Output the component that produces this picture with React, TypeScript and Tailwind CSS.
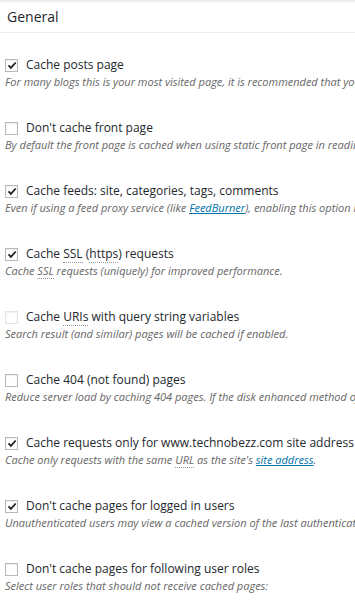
import React from "react";

type Option = {
  label: React.ReactNode;
  desc: React.ReactNode;
  checked: boolean;
  disabled?: boolean;
};

function Abbr({ children }: { children: React.ReactNode }) {
  return (
    <span className="border-b border-dotted border-[#999]">{children}</span>
  );
}

function Link({ children }: { children: React.ReactNode }) {
  return <span className="text-[#0073aa] underline">{children}</span>;
}

const options: Option[] = [
  {
    label: "Cache posts page",
    desc: "For many blogs this is your most visited page, it is recommended that you cache it.",
    checked: true,
  },
  {
    label: "Don't cache front page",
    desc: "By default the front page is cached when using static front page in reading settings.",
    checked: false,
  },
  {
    label: "Cache feeds: site, categories, tags, comments",
    desc: (
      <>
        Even if using a feed proxy service (like <Link>FeedBurner</Link>), enabling this option is still recommended.
      </>
    ),
    checked: true,
  },
  {
    label: (
      <>
        Cache <Abbr>SSL</Abbr> (<Abbr>https</Abbr>) requests
      </>
    ),
    desc: (
      <>
        Cache <Abbr>SSL</Abbr> requests (uniquely) for improved performance.
      </>
    ),
    checked: true,
  },
  {
    label: (
      <>
        Cache <Abbr>URIs</Abbr> with query string variables
      </>
    ),
    desc: "Search result (and similar) pages will be cached if enabled.",
    checked: false,
    disabled: true,
  },
  {
    label: "Cache 404 (not found) pages",
    desc: "Reduce server load by caching 404 pages. If the disk enhanced method of disk caching is used.",
    checked: false,
  },
  {
    label: "Cache requests only for www.technobezz.com site address",
    desc: (
      <>
        Cache only requests with the same <Abbr>URL</Abbr> as the site's <Link>site address</Link>.
      </>
    ),
    checked: true,
  },
  {
    label: "Don't cache pages for logged in users",
    desc: "Unauthenticated users may view a cached version of the last authenticated user's view.",
    checked: true,
  },
  {
    label: "Don't cache pages for following user roles",
    desc: "Select user roles that should not receive cached pages:",
    checked: false,
  },
];

function Checkbox({ checked, disabled }: { checked: boolean; disabled?: boolean }) {
  return (
    <span
      className={`flex h-[13px] w-[13px] shrink-0 items-center justify-center border bg-white ${
        disabled ? "border-[#e2e4e7]" : "border-[#b4b9be]"
      } shadow-[inset_0_1px_2px_rgba(0,0,0,0.07)]`}>
      {checked && (
        <svg width="10" height="9" viewBox="0 0 10 9" fill="none">
          <path d="M1.5 4.4 L3.9 6.9 L8.7 1.5" stroke="#222" strokeWidth="1.8" />
        </svg>
      )}
    </span>
  );
}

export default function App() {
  return (
    <div className="w-[355px] h-[600px] overflow-hidden bg-white font-['Open_Sans',sans-serif]">
      <div className="h-[2px] bg-[#eeeeee]" />
      <div className="border-b border-[#eeeeee] px-[7px] pt-[6px] pb-[6px] text-[14px] leading-[18px] text-[#23282d]">
        General
      </div>
      <div className="flex flex-col gap-[29px] pt-[23px] pl-[5px]">
        {options.map((opt, i) => (
          <div key={i} className="flex flex-col">
            <div className="flex items-center gap-[8px] h-[18px]">
              <Checkbox checked={opt.checked} disabled={opt.disabled} />
              <span className="whitespace-nowrap text-[12px] leading-[18px] text-[#23282d]">
                {opt.label}
              </span>
            </div>
            <div className="h-[16px] whitespace-nowrap text-[11px] italic leading-[16px] text-[#666]">
              {opt.desc}
            </div>
          </div>
        ))}
      </div>
    </div>
  );
}
